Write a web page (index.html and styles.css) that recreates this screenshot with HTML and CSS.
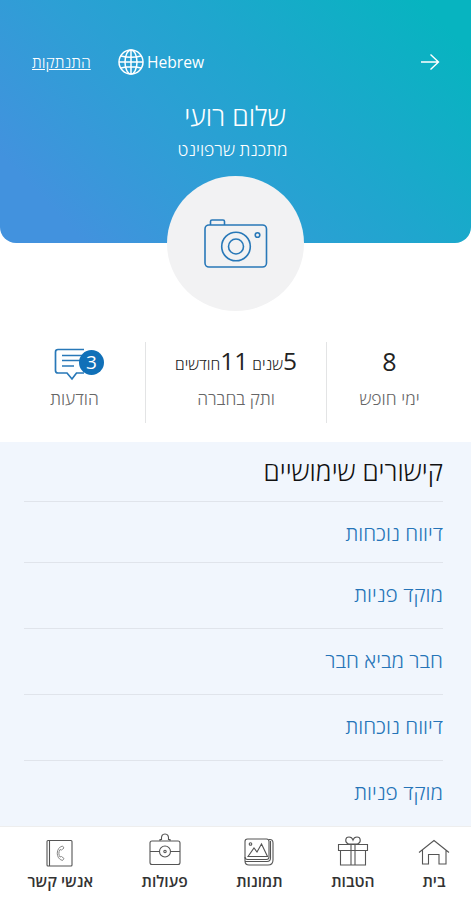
FILE: index.html
```html
<!DOCTYPE html>
<html lang="he" dir="rtl">
<head>
<meta charset="utf-8">
<title>שלום רועי</title>
<link rel="stylesheet" href="styles.css">
</head>
<body>
<header class="hero">
  <div class="topbar">
    <svg class="arrow" width="20" height="18" viewBox="0 0 20 18"><path d="M1 9H18.500M10.500 1.500L18.500 9L10.500 16.500"/></svg>
    <div class="lang">
      <span dir="ltr">Hebrew</span>
      <svg class="globe" width="28" height="28" viewBox="0 0 28 28"><circle cx="14" cy="14" r="12"/><ellipse cx="14" cy="14" rx="6" ry="12"/><path d="M14 2V26M2 14H26M4 8Q14 10.500 24 8M4 20Q14 17.500 24 20"/></svg>
    </div>
    <a class="logout">התנתקות</a>
  </div>
  <h1 class="name">שלום רועי</h1>
  <p class="role">מתכנת שרפוינט</p>
  <div class="avatar">
    <svg width="66" height="52" viewBox="0 0 66 52"><rect x="2" y="7" width="61.500" height="42" rx="4"/><path d="M7.500 7V3.500Q7.500 2 9 2H20Q21.500 2 21.500 3.500V7"/><circle cx="33" cy="28.500" r="14.300"/><circle cx="33" cy="28.500" r="7.500"/><circle cx="54.500" cy="17" r="2.300"/></svg>
  </div>
</header>
<section class="stats">
  <div class="stat days"><div class="value">8</div><div class="label">ימי חופש</div></div>
  <div class="stat tenure"><div class="value">5<small>שנים </small>11<small>חודשים</small></div><div class="label">ותק בחברה</div></div>
  <div class="stat inbox">
    <div class="value messages">
      <svg width="37" height="33" viewBox="0 0 37 33"><path d="M30 1.500H4Q1.500 1.500 1.500 4V22.500Q1.500 25 4 25H13L18 31L22.500 25H30"/><path d="M8 7.500H28M8 12.500H28M8 18H20"/></svg>
      <span class="badge">3</span>
    </div>
    <div class="label">הודעות</div>
  </div>
</section>
<main class="links">
  <h2>קישורים שימושיים</h2>
  <a class="short">דיווח נוכחות</a>
  <a>מוקד פניות</a>
  <a>חבר מביא חבר</a>
  <a>דיווח נוכחות</a>
  <a>מוקד פניות</a>
</main>
<nav class="tabs">
  <a class="home"><svg width="32" height="36" viewBox="0 0 32 36"><path d="M1 20.500L16 8.500L31 20.500M4.500 18V32H10.500V22.500H21V32H28V18"/></svg>בית</a>
  <a class="perks"><svg width="32" height="36" viewBox="0 0 32 36"><path d="M1.500 12.500H30.500V18.500H1.500ZM3.500 18.500H28.500V33H3.500ZM14 12.500V33M18 12.500V33"/><path d="M16 12H11.500C7.500 10.500 8 5 12 5Q15 5 16 8Q17 5 20 5C24 5 24.500 10.500 20.500 12Z"/></svg>הטבות</a>
  <a class="photos"><svg width="32" height="36" viewBox="0 0 32 36"><rect x="2" y="7" width="24" height="20.500" rx="2.500"/><path d="M26 7.500Q30 7 30 11V28Q30 33 25 33H6Q2 33 2 29V25M2 29.500H24Q27.500 29.500 27.500 26V9M5 24.500L11 16L14 20L18.500 12L24.500 24.500Z"/><circle cx="7.500" cy="12" r="1.300"/></svg>תמונות</a>
  <a class="actions"><svg width="32" height="36" viewBox="0 0 32 36"><rect x="1" y="9" width="30" height="23.500" rx="2"/><path d="M11 9V7.500H12.500Q12 2 16 2Q20 2 19.500 7.500H21V9M1 19.500H10.500M21.500 19.500H31"/><circle cx="16" cy="19.500" r="5.500"/><circle cx="16" cy="19.500" r="1.200"/></svg>פעולות</a>
  <a class="contacts"><svg width="32" height="36" viewBox="0 0 32 36"><rect x="3" y="8.500" width="25" height="25.500" rx="1"/><path d="M5.500 9V34"/><path class="handset" d="M18.500 14C11.500 15.500 11.500 27 18.500 28.500L20 26.500L17.500 24.500L16 25C14.500 23 14.500 20 16 17.500L17.500 18L20 16Z"/></svg>אנשי קשר</a>
</nav>
</body>
</html>
```
FILE: styles.css
```css
* { box-sizing: border-box; }
body {
  margin: 0;
  width: 471px;
  height: 900px;
  overflow: hidden;
  display: flex;
  flex-direction: column;
  background: #fff;
  font-family: "Open Sans", "Liberation Sans", sans-serif;
}
svg { fill: none; display: block; flex: none; }
.hero {
  height: 243px;
  flex: none;
  padding-top: 48px;
  border-radius: 0 0 16px 16px;
  background: linear-gradient(46deg, #4292de 12%, #2d9fd5 40%, #1fa6ce 60%, #07b4c0 93%);
  color: #fff;
  display: flex;
  flex-direction: column;
  align-items: center;
}
.topbar {
  width: 100%;
  height: 28px;
  flex: none;
  padding: 0 31px 0 32px;
  display: flex;
  align-items: center;
}
.arrow { stroke: #fff; stroke-width: 1.4; }
.lang { display: flex; align-items: center; gap: 2px; margin-right: 216px; font-size: 15.6px; }
.globe { stroke: #fff; stroke-width: 1.5; }
.logout { margin-right: auto; font-size: 15.8px; text-decoration: underline; font-weight: 300; }
.name { margin: 21px 0 0; padding-right: 1px; font-size: 26.8px; line-height: 38px; font-weight: 350; }
.role { margin: 2px 0 0; padding-right: 6px; font-size: 17.5px; line-height: 24px; font-weight: 350; }
.avatar {
  flex: none;
  width: 137px;
  height: 135px;
  margin-top: 15px;
  border-radius: 50%;
  background: #f2f2f3;
  display: flex;
  align-items: center;
  justify-content: center;
}
.avatar svg { stroke: #2878b8; stroke-width: 1.6; margin-top: 1px; }
.stats { height: 81px; margin-top: 99px; flex: none; display: flex; text-align: center; }
.stat { border-left: 1px solid #e3e4e5; }
.days { width: 145px; padding-right: 19px; }
.tenure { width: 181px; }
.inbox { width: 145px; border: 0; }
.inbox .label { padding-left: 4px; }
.value { height: 39px; line-height: 38px; font-size: 25px; color: #222; white-space: nowrap; }
.tenure .value { padding-left: 29px; text-align: left; font-size: 24.5px; }
.value small { font-size: 15.7px; font-weight: 300; }
.label { font-size: 17.5px; line-height: 34px; color: #666; font-weight: 300; }
.messages { display: flex; direction: ltr; align-items: center; padding-left: 54px; }
.messages svg { stroke: #2878b8; stroke-width: 1.7; margin-top: 5px; }
.badge {
  width: 25px;
  height: 25px;
  margin-left: -12px;
  margin-top: 1px;
  border-radius: 50%;
  background: #1070b8;
  color: #fff;
  font-size: 19px;
  line-height: 25px;
  z-index: 1;
}
.links {
  height: 384px;
  margin-top: 19px;
  flex: none;
  padding: 0 28px 0 24px;
  background: #f1f6fd;
  display: flex;
  flex-direction: column;
}
.links h2 { margin: 0; height: 59px; line-height: 58px; font-size: 26.3px; font-weight: 300; color: #111; }
.links a { height: 66px; line-height: 62px; border-top: 1px solid #e0e4eb; color: #2574b8; font-size: 20.8px; font-weight: 300; flex: none; }
.links .short { height: 61px; line-height: 63px; }
.tabs {
  height: 74px;
  flex: none;
  border-top: 1px solid #eee;
  padding: 5px 21px 0 0;
  display: flex;
  gap: 48.5px;
}
.tabs a { display: flex; flex-direction: column; align-items: center; font-size: 15.6px; line-height: 22px; font-weight: 600; color: #333; white-space: nowrap; }
.tabs .perks { margin-right: -5px; }
.tabs svg { stroke: #555; stroke-width: 1.1; margin-bottom: 2px; }
.tabs .handset { stroke: #888; stroke-width: 1; }
```
